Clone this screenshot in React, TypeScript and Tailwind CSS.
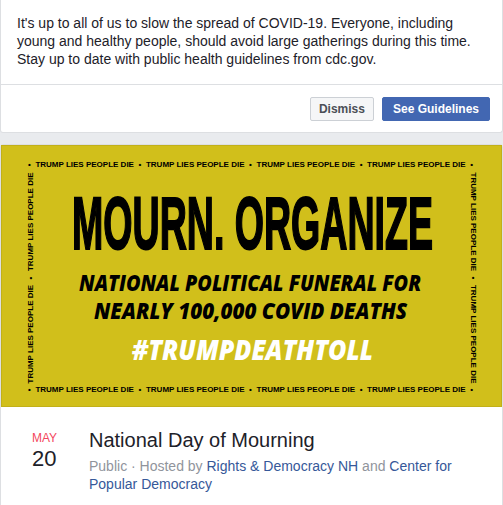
import React from 'react'

const strip = ['•', 'TRUMP LIES PEOPLE DIE', '•', 'TRUMP LIES PEOPLE DIE', '•', 'TRUMP LIES PEOPLE DIE', '•', 'TRUMP LIES PEOPLE DIE', '•']
const side = ['TRUMP LIES PEOPLE DIE', '•', 'TRUMP LIES PEOPLE DIE']

function Strip({ items, className }: { items: string[]; className: string }) {
  return (
    <div className={`absolute flex justify-between items-center h-[10px] text-[8px] leading-[10px] font-bold text-black ${className}`}>
      {items.map((t, i) => (
        <span key={i}>{t}</span>
      ))}
    </div>
  )
}

// poster lettering, sized to the banner
function Poster() {
  return (
    <svg className="absolute inset-0" width="499" height="260" viewBox="0 0 499 260">
      <text
        x="70"
        y="103"
        textLength="361"
        lengthAdjust="spacingAndGlyphs"
        fontFamily="Liberation Sans, Arial, sans-serif"
        fontWeight="700"
        fontSize="75"
        fill="#000"
        stroke="#000"
        strokeWidth="2"
      >
        MOURN. ORGANIZE
      </text>
      <g fontFamily="Open Sans, sans-serif" fontStyle="italic" fontWeight="800" lengthAdjust="spacingAndGlyphs">
        <text x="77" y="145" textLength="342" lengthAdjust="spacingAndGlyphs" fontSize="22" fill="#000">
          NATIONAL POLITICAL FUNERAL FOR
        </text>
        <text x="92" y="173" textLength="313" lengthAdjust="spacingAndGlyphs" fontSize="22" fill="#000">
          NEARLY 100,000 COVID DEATHS
        </text>
        <text x="130" y="214" textLength="241" lengthAdjust="spacingAndGlyphs" fontSize="29" fill="#fff">
          #TRUMPDEATHTOLL
        </text>
      </g>
    </svg>
  )
}

export default function App() {
  return (
    <main className="w-[503px] h-[505px] bg-[#e9ebee] overflow-hidden font-['Liberation_Sans',Arial,sans-serif]">
      {/* covid notice */}
      <div className="bg-white border-x border-b border-[#dddfe2] rounded-b-[3px]">
        <p className="px-4 pt-[14px] pb-4 text-[14px] leading-[18px] text-[#1d2129]">
          It's up to all of us to slow the spread of COVID-19. Everyone, including young and healthy people, should avoid large gatherings during this time. Stay up to date with public health guidelines from cdc.gov.
        </p>
        <div className="border-t border-[#dddfe2] flex justify-end gap-2 pt-3 pb-[11px] pr-3">
          <button className="h-6 px-2 rounded-[2px] border border-[#ccd0d5] bg-[#f5f6f7] text-[#4b4f56] text-[12px] font-bold">
            Dismiss
          </button>
          <button className="h-6 px-[10px] rounded-[2px] border border-[#4267b2] bg-[#4267b2] text-white text-[12px] font-bold">
            See Guidelines
          </button>
        </div>
      </div>

      {/* event card */}
      <div className="mt-[11px] bg-white border border-[#dddfe2] rounded-t-[3px] h-[400px]">
        <div className="relative h-[262px] bg-[#d1bf1b] border border-[#c2b019] overflow-hidden">
          <Strip items={strip} className="left-[26px] right-[28px] top-[14px]" />
          <Strip items={strip} className="left-[26px] right-[28px] top-[239px]" />
          <Strip items={side} className="w-[211px] left-[-77px] top-[127px] -rotate-90" />
          <Strip items={side} className="w-[211px] left-[365px] top-[127px] rotate-90" />
          <Poster />
        </div>

        <div className="flex pt-[21px] pl-[31px] pr-3">
          <div className="w-[57px] mt-[2px]">
            <div className="text-[12px] leading-[16px] text-[#f3475d]">MAY</div>
            <div className="text-[22px] leading-[26px] text-[#1d2129]">20</div>
          </div>
          <div className="flex-1">
            <div className="text-[20px] leading-[24px] text-[#1d2129]">National Day of Mourning</div>
            <p className="mt-[5px] text-[14px] leading-[18px] text-[#90949c]">
              Public · Hosted by <a className="text-[#365899]">Rights &amp; Democracy NH</a> and{' '}
              <a className="text-[#365899]">Center for Popular Democracy</a>
            </p>
          </div>
        </div>
      </div>
    </main>
  )
}
